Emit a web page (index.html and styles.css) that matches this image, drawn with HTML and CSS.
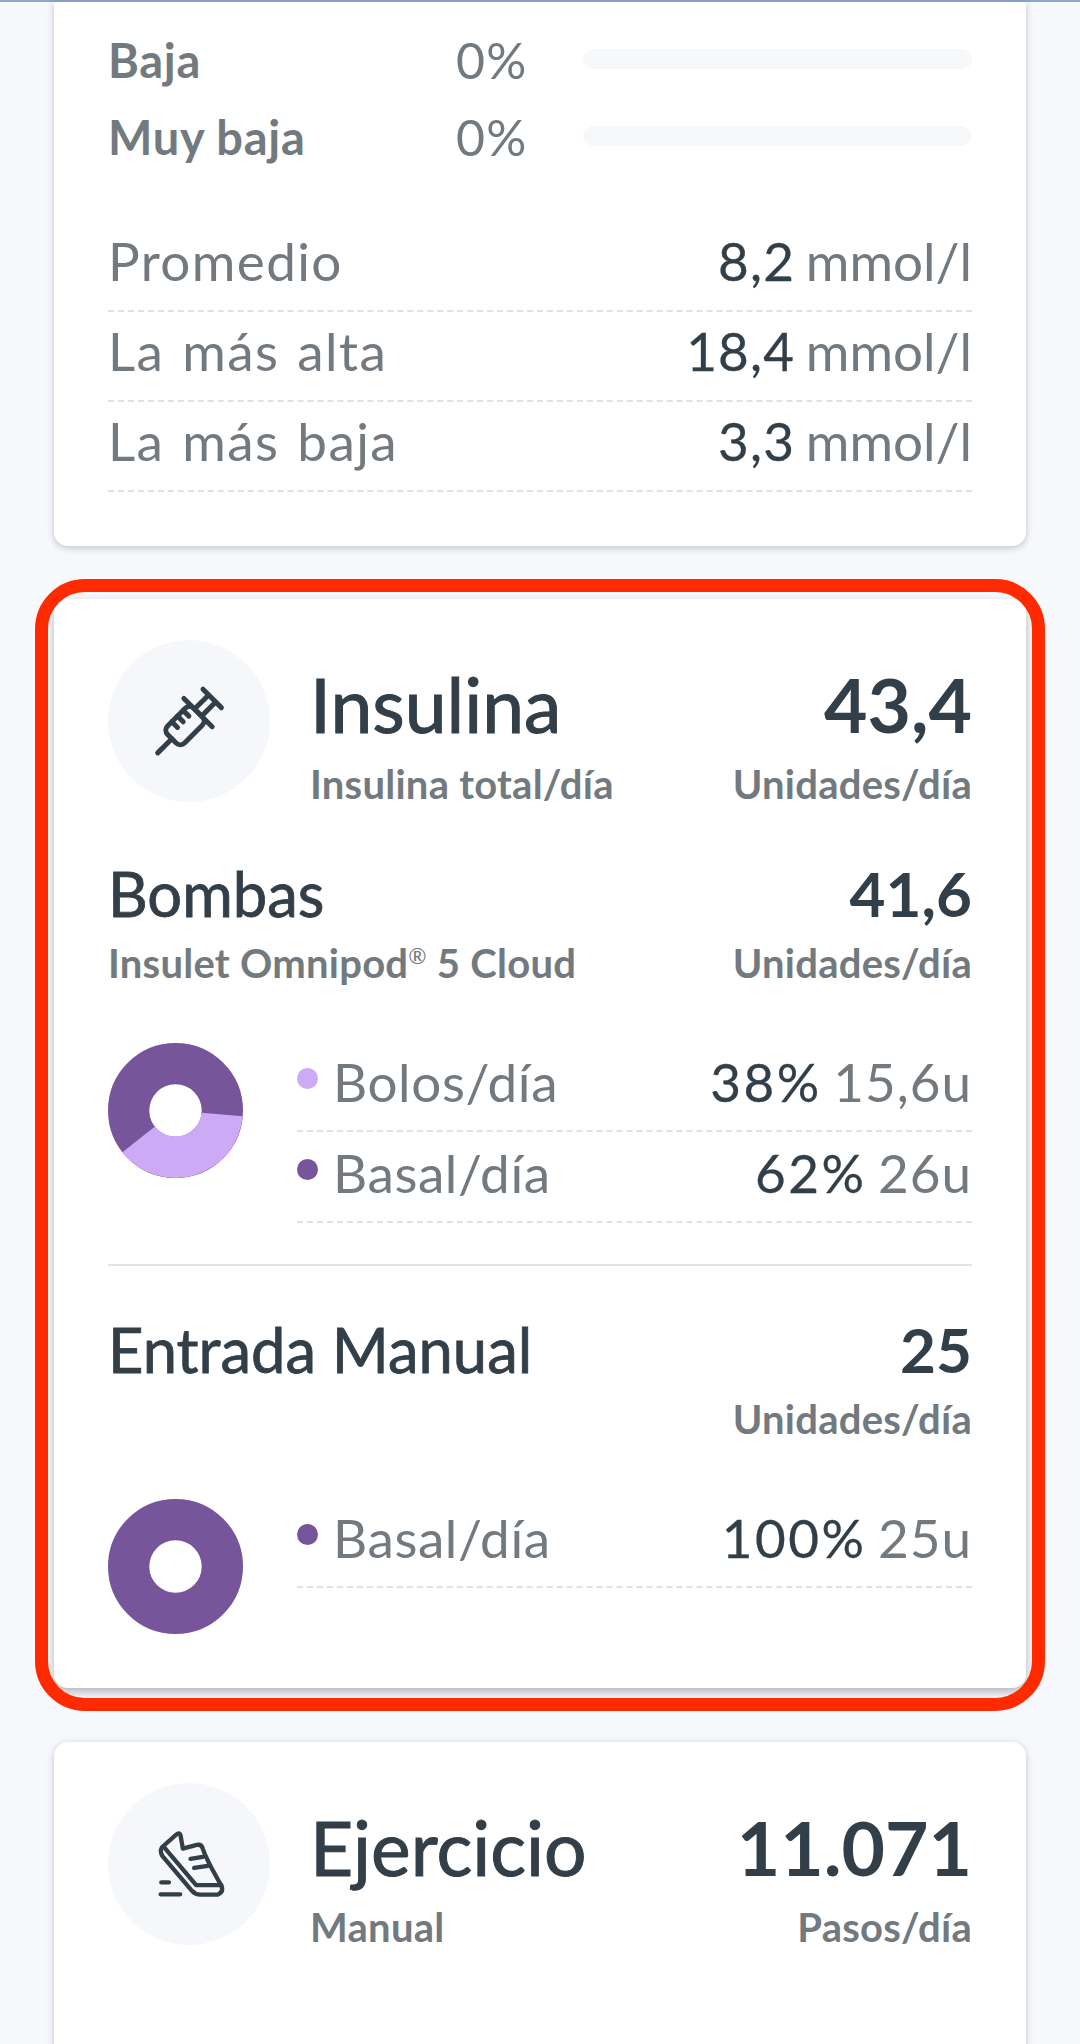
FILE: index.html
```html
<!DOCTYPE html>
<html lang="es">
<head>
<meta charset="utf-8">
<title>Insulina</title>
<link rel="stylesheet" href="styles.css">
</head>
<body>
<div class="topline"></div>
<main class="page">
  <section class="card card-top">
    <div class="range"><span class="range-label">Baja</span><span class="range-pct">0%</span><span class="bar"></span></div>
    <div class="range"><span class="range-label">Muy baja</span><span class="range-pct">0%</span><span class="bar"></span></div>
    <div class="stats">
      <div class="stat"><span class="stat-label">Promedio</span><span class="stat-val"><b>8,2</b> mmol/l</span></div>
      <div class="stat"><span class="stat-label">La más alta</span><span class="stat-val"><b>18,4</b> mmol/l</span></div>
      <div class="stat"><span class="stat-label">La más baja</span><span class="stat-val"><b>3,3</b> mmol/l</span></div>
    </div>
  </section>

  <section class="card card-insulin">
    <header class="head">
      <span class="icon-circle">
        <svg class="icon" viewBox="0 0 90 90" width="90" height="90" fill="none" stroke="#323f48" stroke-width="5" stroke-linecap="round" stroke-linejoin="round">
          <g transform="translate(-3.7 4.3) rotate(45 45 45)">
            <path d="M45 84V64"/>
            <rect x="33" y="27" width="24" height="37" rx="6"/>
            <path d="M25 27H65M40 27V7M50 27V7M32 7H58"/>
            <path d="M33 36H41M33 44H41M33 52H41"/>
          </g>
        </svg>
      </span>
      <div class="head-text">
        <h2 class="title">Insulina</h2>
        <p class="sub">Insulina total/día</p>
      </div>
      <div class="head-num">
        <div class="big">43,4</div>
        <p class="sub">Unidades/día</p>
      </div>
    </header>

    <div class="block block-pump">
      <div class="block-head">
        <div><h3 class="h3">Bombas</h3><p class="sub">Insulet Omnipod<sup class="reg">®</sup> 5 Cloud</p></div>
        <div class="head-num"><div class="num">41,6</div><p class="sub">Unidades/día</p></div>
      </div>
      <div class="split">
        <svg class="donut" viewBox="-67 -67 134 134" width="135" height="135">
          <circle r="46.5" fill="none" stroke="#77559b" stroke-width="41"/>
          <path d="M66.7 5.8A67 67 0 0 1 -52.7 41.4L-20.4 16A26 26 0 0 0 25.9 2.3Z" fill="#cdaaf5"/>
        </svg>
        <div class="legend">
          <div class="leg"><span class="dot dot-light"></span><span class="leg-label">Bolos/día</span><span class="leg-val"><b>38%</b> 15,6u</span></div>
          <div class="leg"><span class="dot dot-dark"></span><span class="leg-label">Basal/día</span><span class="leg-val"><b>62%</b> 26u</span></div>
        </div>
      </div>
    </div>

    <div class="block block-manual">
      <div class="block-head">
        <div><h3 class="h3">Entrada Manual</h3></div>
        <div class="head-num"><div class="num">25</div><p class="sub">Unidades/día</p></div>
      </div>
      <div class="split">
        <svg class="donut" viewBox="-67 -67 134 134" width="135" height="135">
          <circle r="46.5" fill="none" stroke="#77559b" stroke-width="41"/>
        </svg>
        <div class="legend">
          <div class="leg"><span class="dot dot-dark"></span><span class="leg-label">Basal/día</span><span class="leg-val"><b>100%</b> 25u</span></div>
        </div>
      </div>
    </div>
  </section>

  <section class="card card-exercise">
    <header class="head">
      <span class="icon-circle">
        <svg class="icon" viewBox="180 170 220 220" width="73" height="73" fill="none" stroke="#323f48" stroke-width="13" stroke-linecap="round" stroke-linejoin="round">
          <path d="M207 228L250 190Q260 182 263 192L270 232L312 221Q326 218 330 232C342 270 368 310 386 344Q394 362 374 371H322Q308 371 298 360L208 254Q200 240 207 228Z"/>
          <path d="M212 226L310 342H386"/>
          <path d="M293 263L330 257M304 290L345 284"/>
          <path d="M205 334H228M203 370H262"/>
        </svg>
      </span>
      <div class="head-text">
        <h2 class="title">Ejercicio</h2>
        <p class="sub">Manual</p>
      </div>
      <div class="head-num">
        <div class="big">11.071</div>
        <p class="sub">Pasos/día</p>
      </div>
    </header>
  </section>
</main>
</body>
</html>
```
FILE: styles.css
```css
* { box-sizing: border-box; }
html, body { margin: 0; height: 2044px; overflow: hidden; }
body { background: #f7f8fc; font-family: Lato, "Noto Sans", sans-serif; color: #323f48; }
h2, h3, p { margin: 0; font-weight: inherit; }
b { font-weight: 400; color: #323f48; -webkit-text-stroke: .3px #323f48; }

.topline { height: 2px; background: #8ba6c8; }
.page { padding: 0 54px; display: flex; flex-direction: column; }

.card { background: #fff; border-radius: 14px; box-shadow: 0 2px 7px rgba(50, 60, 80, .28); padding: 0 54px; }
.card-top { height: 544px; padding-top: 19px; border-radius: 0 0 14px 14px; }
.card-insulin { position: relative; margin-top: 53px; height: 1089px; padding-top: 41px; box-shadow: 0 4px 8px rgba(40, 40, 40, .32); }
.card-insulin::after { content: ""; position: absolute; inset: -20px -19px -23px -19px; border: 13px solid #ff2a00; border-radius: 50px; pointer-events: none; }
.card-exercise { margin-top: 54px; height: 400px; padding-top: 41px; }

.range { display: grid; grid-template-columns: 348px 127px 1fr; align-items: center; height: 77px; font-size: 47px; color: #727a80; }
.range-label { font-weight: 700; letter-spacing: .7px; }
.range-pct { font-size: 50px; letter-spacing: 1.3px; }
.bar { height: 20px; border-radius: 10px; background: #f7f8fa; margin-top: -2px; }

.stats { margin-top: 47px; }
.stat { display: flex; justify-content: space-between; align-items: center; height: 90px; padding-bottom: 11px; font-size: 53px; color: #727a80; border-bottom: 2px dashed #dfe1e4; }
.stat-label { letter-spacing: 1.4px; word-spacing: 3px; }
.stat-val { word-spacing: -3px; }
.stat-val b { letter-spacing: 1.2px; }

.head { display: flex; align-items: flex-start; }
.icon-circle { width: 162px; height: 162px; flex: none; border-radius: 50%; background: #f6f7fb; display: flex; align-items: center; justify-content: center; }
.head-text { margin-left: 40px; flex: 1; }
.title { font-size: 75px; line-height: 84px; font-weight: 400; margin-top: 22px; -webkit-text-stroke: 1px #323f48; }
.sub { font-size: 40px; line-height: 46px; font-weight: 700; letter-spacing: .25px; color: #727a80; }
.head-text .sub { margin-top: 15px; }
.head-num { text-align: right; }
.big { font-size: 75px; line-height: 84px; font-weight: 700; margin-top: 22px; }
.head-num > .sub { margin-top: 15px; }

.block-pump { margin-top: 52px; border-bottom: 2px solid #e2e4e8; height: 407px; }
.block-manual { margin-top: 49px; }
.block-head { display: flex; justify-content: space-between; align-items: flex-start; }
.h3 { font-size: 61.5px; line-height: 68px; font-weight: 400; -webkit-text-stroke: .8px #323f48; }
.num { font-size: 62px; line-height: 68px; font-weight: 700; }
.block-head .sub, .block-head .head-num > .sub { margin-top: 13px; }
.reg { font-size: 22px; line-height: 0; vertical-align: super; font-weight: 400; }

.split { display: flex; align-items: flex-start; margin-top: 57px; }
.donut { flex: none; margin-right: 54px; }
.legend { flex: 1; margin-top: -2px; }
.leg { display: flex; align-items: center; height: 91px; padding-bottom: 8px; font-size: 53px; letter-spacing: .6px; color: #727a80; border-bottom: 2px dashed #dfe1e4; }
.leg-val { word-spacing: -3px; letter-spacing: 1px; }
.leg-val b { letter-spacing: 2.5px; }
.dot { width: 21px; height: 21px; border-radius: 50%; margin: -6px 15px 0 0; flex: none; }
.dot-light { background: #cdaaf5; }
.dot-dark { background: #77559b; }
.leg-label { flex: 1; }
```
